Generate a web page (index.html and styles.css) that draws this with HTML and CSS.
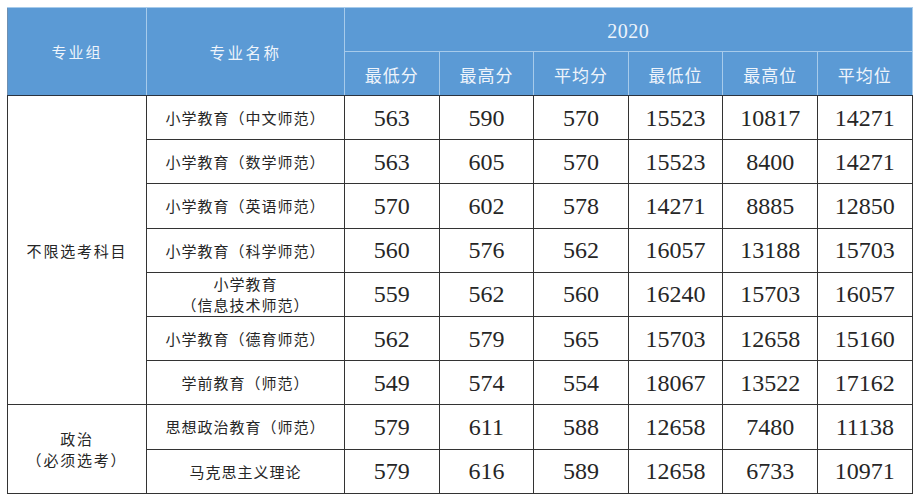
FILE: index.html
```html
<!DOCTYPE html>
<html lang="zh">
<head>
<meta charset="utf-8">
<link rel="stylesheet" href="styles.css">
</head>
<body>
<table class="score">
  <colgroup>
    <col class="c-group"><col class="c-name">
    <col class="c-num"><col class="c-num"><col class="c-num">
    <col class="c-num"><col class="c-num"><col class="c-num">
  </colgroup>
  <thead>
    <tr class="h1">
      <th rowspan="2" class="hz">专业组</th>
      <th rowspan="2" class="hz hz-name">专业名称</th>
      <th colspan="6" class="year">2020</th>
    </tr>
    <tr class="h2">
      <th>最低分</th><th>最高分</th><th>平均分</th><th>最低位</th><th>最高位</th><th>平均位</th>
    </tr>
  </thead>
  <tbody>
    <tr>
      <td rowspan="7" class="grp">不限选考科目</td>
      <td class="name">小学教育（中文师范）</td>
      <td>563</td><td>590</td><td>570</td><td>15523</td><td>10817</td><td>14271</td>
    </tr>
    <tr>
      <td class="name">小学教育（数学师范）</td>
      <td>563</td><td>605</td><td>570</td><td>15523</td><td>8400</td><td>14271</td>
    </tr>
    <tr>
      <td class="name">小学教育（英语师范）</td>
      <td>570</td><td>602</td><td>578</td><td>14271</td><td>8885</td><td>12850</td>
    </tr>
    <tr>
      <td class="name">小学教育（科学师范）</td>
      <td>560</td><td>576</td><td>562</td><td>16057</td><td>13188</td><td>15703</td>
    </tr>
    <tr>
      <td class="name two">小学教育<br>（信息技术师范）</td>
      <td>559</td><td>562</td><td>560</td><td>16240</td><td>15703</td><td>16057</td>
    </tr>
    <tr>
      <td class="name">小学教育（德育师范）</td>
      <td>562</td><td>579</td><td>565</td><td>15703</td><td>12658</td><td>15160</td>
    </tr>
    <tr>
      <td class="name">学前教育（师范）</td>
      <td>549</td><td>574</td><td>554</td><td>18067</td><td>13522</td><td>17162</td>
    </tr>
    <tr>
      <td rowspan="2" class="grp two">政治<br>（必须选考）</td>
      <td class="name">思想政治教育（师范）</td>
      <td>579</td><td>611</td><td>588</td><td>12658</td><td>7480</td><td>11138</td>
    </tr>
    <tr>
      <td class="name">马克思主义理论</td>
      <td>579</td><td>616</td><td>589</td><td>12658</td><td>6733</td><td>10971</td>
    </tr>
  </tbody>
</table>
</body>
</html>
```
FILE: styles.css
```css
html, body {
  margin: 0;
  padding: 0;
  background: #ffffff;
}
body {
  padding: 7px 0 0 7px;
}
.score {
  border-collapse: collapse;
  table-layout: fixed;
  width: 905px;
  font-family: "Liberation Serif", "Noto Sans CJK SC", serif;
  color: #262626;
}
.c-group { width: 139px; }
.c-name { width: 198px; }
.c-num { width: 94.6px; }

.score th {
  background: #5b9ad5;
  color: #eef4fb;
  font-weight: normal;
  border: 1px solid #a7cbeb;
  text-align: center;
  vertical-align: middle;
  padding: 0;
  font-family: "Noto Sans CJK SC", serif;
  font-size: 17px;
  letter-spacing: 1px;
}
.score thead tr { height: 44px; }
.score thead tr.h2 th { border-bottom: 1px solid #2b3440; }
.score thead th.hz { border-bottom: 1px solid #2b3440; font-size: 15px; letter-spacing: 2px; }
.score thead th.hz-name { font-size: 15.5px; letter-spacing: 2.5px; }
.score thead tr.h1 th:first-child { border-left: 1px solid #6f8fb0; }
.score thead th.year {
  font-family: "Liberation Serif", serif;
  font-size: 20px;
  letter-spacing: 0.5px;
  padding-top: 3px;
}
.score thead tr.h2 th { padding-top: 2px; }

.score tbody tr { height: 44.2px; }
.score td {
  border: 1px solid #333333;
  text-align: center;
  vertical-align: middle;
  padding: 0;
  font-size: 24px;
  line-height: 1;
}
.score td.name, .score td.grp {
  font-family: "Noto Sans CJK SC", serif;
  font-size: 15px;
  letter-spacing: 1px;
  color: #262626;
}
.score td.grp { letter-spacing: 1.8px; }
.score td.two { line-height: 21px; }
```
